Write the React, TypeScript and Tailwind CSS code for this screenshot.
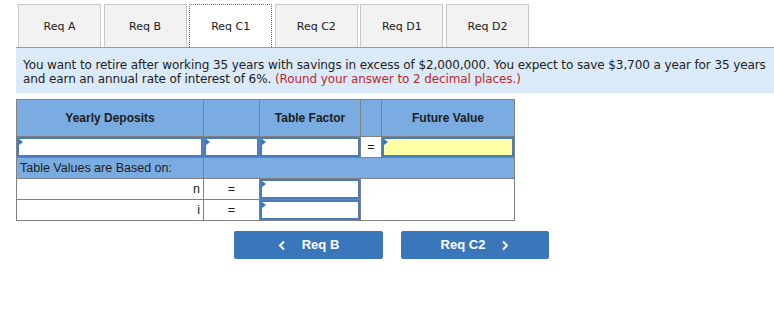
import React from "react";

const tabs = ["Req A", "Req B", "Req C1", "Req C2", "Req D1", "Req D2"];

const InputBox = ({ yellow = false }: { yellow?: boolean }) => (
  <div
    className={`relative h-full w-full border-2 border-[#4a7bbb] ${
      yellow ? "bg-[#ffffa5]" : "bg-white"
    }`}
  >
    <span className="absolute left-0 top-0 h-0 w-0 border-y-[3px] border-l-[4px] border-y-transparent border-l-[#3a72c4]" />
  </div>
);

const App = () => {
  return (
    <div className="h-[325px] w-[774px] overflow-hidden bg-white">
      {/* Tabs */}
      <div className="ml-[18px] flex gap-[2.6px] pt-[4px]">
        {tabs.map((t) => (
          <div
            key={t}
            className={`flex h-[43px] w-[83px] items-center justify-center pt-[3px] text-[11px] text-[#1a1a1a] [font-family:'DejaVu_Sans',sans-serif] ${
              t === "Req C1"
                ? "border border-b-0 border-dotted border-[#5a6a8a] bg-white"
                : "border border-b-0 border-[#c8c8c8] bg-[#f2f2f2]"
            }`}
          >
            {t}
          </div>
        ))}
      </div>

      {/* Question */}
      <div className="ml-[16px] border-t border-[#9a9a9a] bg-[#dbeaf8] pb-[7px] pl-[7px] pr-[1px] pt-[10px] text-[12px] leading-[14px] tracking-[-0.1px] text-[#222] [font-family:'DejaVu_Sans',sans-serif]">
        You want to retire after working 35 years with savings in excess of
        $2,000,000. You expect to save $3,700 a year for 35 years and earn an
        annual rate of interest of 6%.{" "}
        <span className="text-[#c0282d]">
          (Round your answer to 2 decimal places.)
        </span>
      </div>

      {/* Table */}
      <table className="ml-[16px] mt-[6px] border-collapse text-[12.5px] text-[#1c1c1c] [font-family:'Liberation_Sans',Arial,sans-serif]">
        <tbody>
          <tr className="h-[37px] bg-[#7aace2] font-bold">
            <td className="w-[187px] border border-[#808080] text-center text-[12px]">
              Yearly Deposits
            </td>
            <td className="w-[56px] border border-[#808080]" />
            <td className="w-[101px] border border-[#808080] text-center text-[12px]">
              Table Factor
            </td>
            <td className="w-[21px] border border-[#808080]" />
            <td className="w-[133px] border border-[#808080] text-center text-[12px]">
              Future Value
            </td>
          </tr>
          <tr className="h-[21px]">
            <td className="h-[21px] border border-[#808080] p-0">
              <InputBox />
            </td>
            <td className="h-[21px] border border-[#808080] p-0">
              <InputBox />
            </td>
            <td className="h-[21px] border border-[#808080] p-0">
              <InputBox />
            </td>
            <td className="border border-[#808080] bg-white text-center">
              =
            </td>
            <td className="h-[21px] border border-[#808080] p-0">
              <InputBox yellow />
            </td>
          </tr>
          <tr className="h-[21px] bg-[#7aace2]">
            <td className="border border-[#808080] px-[3px]">
              Table Values are Based on:
            </td>
            <td colSpan={4} className="border border-[#808080]" />
          </tr>
          <tr className="h-[21px]">
            <td className="border border-[#808080] px-[3px] text-right">n</td>
            <td className="border border-[#808080] text-center">=</td>
            <td className="h-[21px] border border-[#808080] p-0">
              <InputBox />
            </td>
            <td
              colSpan={2}
              rowSpan={2}
              className="border border-[#808080] bg-white"
            />
          </tr>
          <tr className="h-[21px]">
            <td className="border border-[#808080] px-[3px] text-right">i</td>
            <td className="border border-[#808080] text-center">=</td>
            <td className="h-[21px] border border-[#808080] p-0">
              <InputBox />
            </td>
          </tr>
        </tbody>
      </table>

      {/* Navigation */}
      <div className="ml-[234px] mt-[10px] flex gap-[18px] [font-family:'Liberation_Sans',Arial,sans-serif]">
        <button className="flex h-[28px] w-[149px] items-center justify-center gap-[16px] rounded-[2px] bg-[#3a76ba] text-[13px] font-bold text-white">
          <svg width="8" height="11" viewBox="0 0 8 11">
            <path
              d="M6 1.5L2 5.5l4 4"
              fill="none"
              stroke="white"
              strokeWidth="2"
            />
          </svg>
          Req B
        </button>
        <button className="flex h-[28px] w-[148px] items-center justify-center gap-[16px] rounded-[2px] bg-[#3a76ba] text-[13px] font-bold text-white">
          Req C2
          <svg width="8" height="11" viewBox="0 0 8 11">
            <path
              d="M2 1.5l4 4-4 4"
              fill="none"
              stroke="white"
              strokeWidth="2"
            />
          </svg>
        </button>
      </div>
    </div>
  );
};

export default App;
